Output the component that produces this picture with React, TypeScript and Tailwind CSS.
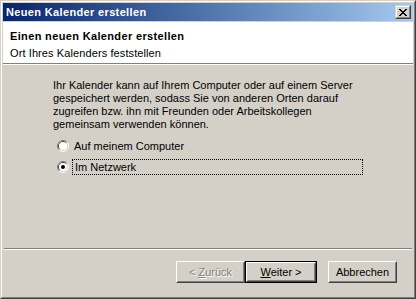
const FONT = { fontFamily: '"Liberation Sans", Arial, sans-serif' }

function CloseGlyph() {
  const rows = ["xx....xx", ".xx..xx.", "..xxxx..", "...xx...", "..xxxx..", ".xx..xx.", "xx....xx"]
  return (
    <svg width="8" height="7" viewBox="0 0 8 7" shapeRendering="crispEdges">
      {rows.map((r, y) =>
        r.split("").map((c, x) => (c === "x" ? <rect key={`${x}-${y}`} x={x} y={y} width="1" height="1" fill="#000" /> : null))
      )}
    </svg>
  )
}

function Radio({ checked }: { checked?: boolean }) {
  return (
    <svg width="12" height="12" viewBox="0 0 12 12" className="shrink-0">
      <path d="M2.11 9.89 A5.5 5.5 0 0 1 9.89 2.11" fill="none" stroke="#808080" />
      <path d="M9.89 2.11 A5.5 5.5 0 0 1 2.11 9.89" fill="none" stroke="#ffffff" />
      <path d="M2.82 9.18 A4.5 4.5 0 0 1 9.18 2.82" fill="none" stroke="#404040" />
      <path d="M9.18 2.82 A4.5 4.5 0 0 1 2.82 9.18" fill="none" stroke="#d4d0c8" />
      <circle cx="6" cy="6" r="4" fill="#fff" />
      {checked && <circle cx="6" cy="6" r="2" fill="#000" />}
    </svg>
  )
}

function Btn({ children, isDefault, className }: { children: React.ReactNode; isDefault?: boolean; className: string }) {
  if (isDefault) {
    return (
      <div className={`h-[22px] border border-black ${className}`}>
        <div className="h-full border border-t-white border-l-white border-b-[#404040] border-r-[#404040]">
          <div className="flex h-full items-center justify-center border border-t-[#d4d0c8] border-l-[#d4d0c8] border-b-[#808080] border-r-[#808080] text-[11px] leading-[13px] text-black">
            {children}
          </div>
        </div>
      </div>
    )
  }
  return (
    <div className={`h-[22px] border border-t-white border-l-white border-b-[#404040] border-r-[#404040] ${className}`}>
      <div className="flex h-full items-center justify-center border border-t-[#d4d0c8] border-l-[#d4d0c8] border-b-[#808080] border-r-[#808080] text-[11px] leading-[13px] text-black">
        {children}
      </div>
    </div>
  )
}

export default function App() {
  return (
    <div style={FONT} className="h-[299px] w-[416px] border border-t-[#d4d0c8] border-l-[#d4d0c8] border-b-[#404040] border-r-[#404040]">
      <div className="h-full border border-t-white border-l-white border-b-[#808080] border-r-[#808080]">
        <div className="flex h-full flex-col border border-[#d4d0c8] bg-[#d4d0c8]">
          {/* caption */}
          <div className="flex h-[18px] items-center justify-between bg-gradient-to-r from-[#0a246a] to-[#a6caf0] pl-[3px] pr-[2px]">
            <span className="text-[11px] font-bold leading-[13px] tracking-[0.35px] text-white">Neuen Kalender erstellen</span>
            <div className="flex h-[14px] w-[16px] border border-t-[#d4d0c8] border-l-[#d4d0c8] border-b-[#404040] border-r-[#404040]">
              <div className="flex flex-1 items-center justify-center border border-t-white border-l-white border-b-[#808080] border-r-[#808080] bg-[#d4d0c8]">
                <CloseGlyph />
              </div>
            </div>
          </div>
          <div className="h-[1px]" />
          {/* header */}
          <div className="h-[41px] bg-white pl-[7px] pt-[8px] text-[11px] leading-[13px] text-black">
            <div className="font-bold tracking-[0.35px]">Einen neuen Kalender erstellen</div>
            <div className="mt-[4px] tracking-[0.1px]">Ort Ihres Kalenders feststellen</div>
          </div>
          <div className="h-[1px] bg-[#808080]" />
          <div className="h-[1px] bg-white" />
          {/* body */}
          <div className="flex-1 pl-[50px] pt-[14px] text-[11px] leading-[13px] text-black">
            <p className="whitespace-nowrap">
              Ihr Kalender kann auf Ihrem Computer oder auf einem Server
              <br />
              gespeichert werden, sodass Sie von anderen Orten darauf
              <br />
              zugreifen bzw. ihn mit Freunden oder Arbeitskollegen
              <br />
              gemeinsam verwenden können.
            </p>
            <div className="mt-[7px] flex h-[16px] items-center pl-[4px]">
              <Radio />
              <span className="ml-[5px] leading-[16px]">Auf meinem Computer</span>
            </div>
            <div className="mt-[5px] flex h-[16px] items-center pl-[4px]">
              <Radio checked />
              <span className="ml-[3px] h-[16px] w-[291px] border border-dotted border-black pl-[2px] leading-[14px]">Im Netzwerk</span>
            </div>
          </div>
          {/* separator */}
          <div className="mx-px h-[1px] bg-[#808080]" />
          <div className="mx-px h-[1px] bg-white" />
          {/* footer */}
          <div className="flex h-[46px] items-start pl-[173px] pt-[11px]">
            <Btn className="w-[69px]">
              <span className="text-[#808080] [text-shadow:1px_1px_0_#fff]">
                &lt; <span className="underline">Z</span>urück
              </span>
            </Btn>
            <Btn isDefault className="w-[72px]">
              <span>
                <span className="underline">W</span>eiter &gt;
              </span>
            </Btn>
            <Btn className="ml-[11px] w-[69px]">Abbrechen</Btn>
          </div>
        </div>
      </div>
    </div>
  )
}
